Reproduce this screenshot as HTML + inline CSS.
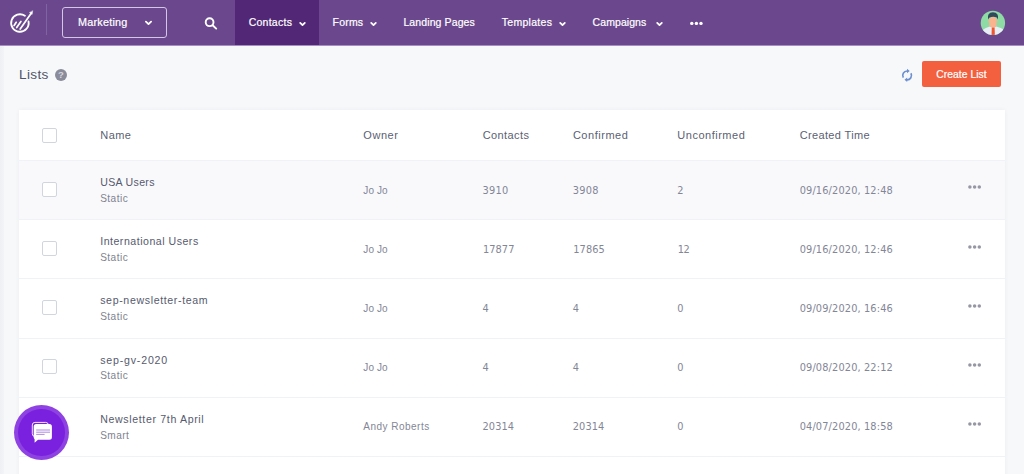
<!DOCTYPE html>
<html><head><meta charset="utf-8">
<style>
*{box-sizing:border-box;margin:0;padding:0}
html,body{width:1024px;height:474px;overflow:hidden}
body{background:#f7f8fa;font-family:"Liberation Sans",sans-serif;position:relative;color:#5b5f73}
.strip{position:absolute;left:0;top:46px;width:4px;height:428px;background:linear-gradient(90deg,#eff0f3,#f3f4f7)}
.nav{position:absolute;left:0;top:0;width:1024px;height:46px;background:#6b488d;border-bottom:1px solid #a58fc0}
.t{position:absolute;top:0;height:45px;line-height:45px;color:#fff;font-size:10.5px;white-space:nowrap;-webkit-text-stroke:0.2px #fff}
#n0{font-size:10.8px}
.active{position:absolute;left:235px;top:0;width:84px;height:45px;background:#522876}
.sep{position:absolute;left:46px;top:4px;width:1px;height:31px;background:#8163a0}
.mk{position:absolute;left:62px;top:7px;width:105px;height:31px;border:1px solid #d4c6e4;border-radius:3px}
.abs{position:absolute}
.chev{fill:none;stroke:#fff;stroke-width:1.8;stroke-linecap:round;stroke-linejoin:round}
h1{position:absolute;left:19px;top:66.5px;font-size:13.6px;font-weight:normal;color:#4f5468;line-height:16px;letter-spacing:0.35px}
.btn{position:absolute;left:922px;top:61px;width:79px;height:26px;background:#f3603f;border-radius:2px;color:#fff;font-size:10.3px;line-height:27.6px;text-align:center;letter-spacing:0.05px;-webkit-text-stroke:0.2px #fff}
.card{position:absolute;left:19px;top:110px;width:986px;height:380px;background:#fff;box-shadow:0 0 4px rgba(70,80,110,0.07)}
.row{position:absolute;left:19px;width:986px;height:59px;border-top:1px solid #f1f2f6}
.row.alt{background:#f9f9fc}
.c{position:absolute;white-space:nowrap;font-size:11px;line-height:14px}
.hd{color:#5b5f73}
.nm{color:#565a6e;font-size:10.6px}
.sub{color:#80838f;font-size:10.1px}
.val{color:#838696;font-size:10px}
.dj{font-family:"DejaVu Sans","Liberation Sans",sans-serif;font-size:9.8px}
.cb{position:absolute;left:42px;width:15px;height:15px;border:1px solid #d0d5e0;border-radius:2px;background:#fff}
.chat{position:absolute;left:14px;top:405px;width:55px;height:55px;border-radius:50%;background:#8e42e2}
.chat:before{content:"";position:absolute;left:4.2px;top:4.2px;width:46.6px;height:46.6px;border-radius:50%;background:#7a20df}
</style></head><body>
<div class="strip"></div>
<div class="nav">
 <div class="active"></div>
 <div class="sep"></div>
 <svg class="abs" style="left:6px;top:6px" width="34" height="34" viewBox="6 6 34 34" fill="none" stroke="#fff" stroke-linecap="round">
  <path d="M28.52 21.48 A8.75 8.75 0 1 1 24.92 15.83" stroke-width="1.85"/>
  <path d="M14.1 25.5 L16.2 22.3" stroke-width="1.7"/>
  <path d="M16.7 27.6 L20.9 21.5" stroke-width="1.7"/>
  <path d="M20.2 29 L31.4 12.9" stroke-width="1.7"/>
  <path d="M32.7 11 L32.1 14.5 L29.6 12.75 Z" fill="#fff" stroke-width="0.4" stroke-linejoin="round"/>
 </svg>
 <div class="mk"></div>
 <svg class="abs chev" style="left:144px;top:19px" width="9" height="8" viewBox="0 0 9 8"><path d="M1.9 2.6 L4.5 5.1 L7.1 2.6"/></svg>
 <svg class="abs" style="left:203px;top:16.4px" width="16" height="15" viewBox="0 0 16 15" fill="none" stroke="#fff" stroke-width="1.9" stroke-linecap="round"><circle cx="6.6" cy="6.2" r="3.9"/><path d="M9.6 9.2 L13.2 12.6"/></svg>
 <svg class="abs chev" style="left:298px;top:20px" width="9" height="8" viewBox="0 0 9 8"><path d="M2.2 2.9 L4.5 5.1 L6.8 2.9"/></svg>
 <svg class="abs chev" style="left:368.6px;top:20px" width="9" height="8" viewBox="0 0 9 8"><path d="M2.2 2.9 L4.5 5.1 L6.8 2.9"/></svg>
 <svg class="abs chev" style="left:558.4px;top:20px" width="9" height="8" viewBox="0 0 9 8"><path d="M2.2 2.9 L4.5 5.1 L6.8 2.9"/></svg>
 <svg class="abs chev" style="left:655px;top:20px" width="9" height="8" viewBox="0 0 9 8"><path d="M2.2 2.9 L4.5 5.1 L6.8 2.9"/></svg>
 <svg class="abs" style="left:689px;top:20px" width="16" height="6" viewBox="0 0 16 6" fill="#fff"><circle cx="2.8" cy="3.4" r="1.7"/><circle cx="7.4" cy="3.4" r="1.7"/><circle cx="12" cy="3.4" r="1.7"/></svg>
 <svg class="abs" style="left:980px;top:10px" width="26" height="26" viewBox="980 10 26 26">
  <defs><clipPath id="av"><circle cx="992.9" cy="22.9" r="12.2"/></clipPath></defs>
  <circle cx="992.9" cy="22.9" r="12.2" fill="#8fdba6"/>
  <g clip-path="url(#av)">
   <path d="M981 36 L981 31 Q986 27.2 990 26.4 L996 26.4 Q1001 27.2 1005.5 31 L1005.5 36 Z" fill="#e9edf5"/>
   <rect x="989.2" y="17" width="7.4" height="10.6" rx="3" fill="#f7b48e"/>
   <path d="M988.6 22 L987.8 21 L989 19.5 Z M997.2 21.6 L998 20.6 L997 19.4Z" fill="#f7b48e"/>
   <path d="M988 19.6 Q986.8 12.4 992.9 12.2 Q999.2 12.4 998 19.4 L996.8 17.6 Q993 16 989.2 17.8 Z" fill="#2f4a5a"/>
   <path d="M991.8 27.4 L994.6 27.4 L994.9 36 L991.5 36 Z" fill="#f0562e"/>
  </g>
 </svg>
</div>
<h1>Lists</h1>
<svg class="abs" style="left:55px;top:68.6px" width="12" height="12" viewBox="0 0 12 12"><circle cx="6" cy="6" r="6" fill="#8b8c9b"/><text x="6" y="9.4" font-size="9.5" font-weight="bold" text-anchor="middle" fill="#d4d5dc" font-family="Liberation Sans, sans-serif">?</text></svg>
<svg class="abs" style="left:899px;top:66px" width="16" height="19" viewBox="899 66 16 19" fill="none" stroke="#6b8fcf" stroke-width="1.7">
 <path d="M903.29 77.6 A4.4 4.4 0 0 1 907.3 71"/><path d="M907 68.7 L907 73.3 L909.7 71 Z" fill="#6b8fcf" stroke="none"/>
 <path d="M910.91 73.2 A4.4 4.4 0 0 1 906.9 79.8"/><path d="M907.2 77.5 L907.2 82.1 L904.5 79.8 Z" fill="#6b8fcf" stroke="none"/>
</svg>
<div class="btn">Create List</div>
<div class="card"></div>
<div class="cb" style="top:128px"></div>
<div class="row alt" style="top:160px"></div>
<div class="cb" style="top:181.8px"></div>
<svg class="abs" style="left:967px;top:184.3px" width="16" height="6" viewBox="0 0 16 6" fill="#9697a5"><circle cx="2.9" cy="3" r="1.75"/><circle cx="7.6" cy="3" r="1.75"/><circle cx="12.3" cy="3" r="1.75"/></svg>
<div class="row" style="top:219px"></div>
<div class="cb" style="top:241.0px"></div>
<svg class="abs" style="left:967px;top:243.5px" width="16" height="6" viewBox="0 0 16 6" fill="#9697a5"><circle cx="2.9" cy="3" r="1.75"/><circle cx="7.6" cy="3" r="1.75"/><circle cx="12.3" cy="3" r="1.75"/></svg>
<div class="row" style="top:278px"></div>
<div class="cb" style="top:300.2px"></div>
<svg class="abs" style="left:967px;top:302.7px" width="16" height="6" viewBox="0 0 16 6" fill="#9697a5"><circle cx="2.9" cy="3" r="1.75"/><circle cx="7.6" cy="3" r="1.75"/><circle cx="12.3" cy="3" r="1.75"/></svg>
<div class="row" style="top:338px"></div>
<div class="cb" style="top:359.4px"></div>
<svg class="abs" style="left:967px;top:361.9px" width="16" height="6" viewBox="0 0 16 6" fill="#9697a5"><circle cx="2.9" cy="3" r="1.75"/><circle cx="7.6" cy="3" r="1.75"/><circle cx="12.3" cy="3" r="1.75"/></svg>
<div class="row" style="top:397px"></div>
<svg class="abs" style="left:967px;top:421.1px" width="16" height="6" viewBox="0 0 16 6" fill="#9697a5"><circle cx="2.9" cy="3" r="1.75"/><circle cx="7.6" cy="3" r="1.75"/><circle cx="12.3" cy="3" r="1.75"/></svg>
<div class="row" style="top:456px"></div>
<div class="t" id="n0" style="left:78.10px;top:0px;letter-spacing:0.224px;">Marketing</div>
<div class="t" id="n1" style="left:248.70px;top:0px;letter-spacing:0.252px;">Contacts</div>
<div class="t" id="n2" style="left:332.50px;top:0px;letter-spacing:0.212px;">Forms</div>
<div class="t" id="n3" style="left:403.40px;top:0px;letter-spacing:0.111px;">Landing Pages</div>
<div class="t" id="n4" style="left:501.70px;top:0px;letter-spacing:0.305px;">Templates</div>
<div class="t" id="n5" style="left:592.60px;top:0px;letter-spacing:0.072px;">Campaigns</div>
<div class="c hd" id="h0" style="left:100.30px;top:128px;letter-spacing:0.385px;">Name</div>
<div class="c hd" id="h1" style="left:363.30px;top:128px;letter-spacing:0.548px;">Owner</div>
<div class="c hd" id="h2" style="left:482.70px;top:128px;letter-spacing:0.397px;">Contacts</div>
<div class="c hd" id="h3" style="left:572.90px;top:128px;letter-spacing:0.531px;">Confirmed</div>
<div class="c hd" id="h4" style="left:677.30px;top:128px;letter-spacing:0.514px;">Unconfirmed</div>
<div class="c hd" id="h5" style="left:799.70px;top:128px;letter-spacing:0.352px;">Created Time</div>
<div class="c nm" id="r0n" style="left:100.20px;top:175px;letter-spacing:0.311px;">USA Users</div>
<div class="c sub" id="r0s" style="left:100.20px;top:192px;letter-spacing:0.450px;">Static</div>
<div class="c val" id="r0o" style="left:363.30px;top:184px;letter-spacing:0.098px;">Jo Jo</div>
<div class="c val dj" id="r0c" style="left:482.50px;top:184px;letter-spacing:0.254px;">3910</div>
<div class="c val dj" id="r0f" style="left:572.80px;top:184px;letter-spacing:0.254px;">3908</div>
<div class="c val dj" id="r0u" style="left:677.30px;top:184px;letter-spacing:0.000px;">2</div>
<div class="c val dj" id="r0d" style="left:799.70px;top:184px;letter-spacing:0.135px;">09/16/2020, 12:48</div>
<div class="c nm" id="r1n" style="left:100.20px;top:234px;letter-spacing:0.504px;">International Users</div>
<div class="c sub" id="r1s" style="left:100.20px;top:251px;letter-spacing:0.450px;">Static</div>
<div class="c val" id="r1o" style="left:363.30px;top:243px;letter-spacing:0.098px;">Jo Jo</div>
<div class="c val dj" id="r1c" style="left:482.90px;top:243px;letter-spacing:0.082px;">17877</div>
<div class="c val dj" id="r1f" style="left:573.30px;top:243px;letter-spacing:0.082px;">17865</div>
<div class="c val dj" id="r1u" style="left:677.70px;top:243px;letter-spacing:-0.369px;">12</div>
<div class="c val dj" id="r1d" style="left:799.70px;top:243px;letter-spacing:0.135px;">09/16/2020, 12:46</div>
<div class="c nm" id="r2n" style="left:100.20px;top:293px;letter-spacing:0.640px;">sep-newsletter-team</div>
<div class="c sub" id="r2s" style="left:100.20px;top:310px;letter-spacing:0.450px;">Static</div>
<div class="c val" id="r2o" style="left:363.30px;top:302px;letter-spacing:0.098px;">Jo Jo</div>
<div class="c val dj" id="r2c" style="left:482.50px;top:302px;letter-spacing:0.000px;">4</div>
<div class="c val dj" id="r2f" style="left:572.80px;top:302px;letter-spacing:0.000px;">4</div>
<div class="c val dj" id="r2u" style="left:677.30px;top:302px;letter-spacing:0.000px;">0</div>
<div class="c val dj" id="r2d" style="left:799.70px;top:302px;letter-spacing:0.135px;">09/09/2020, 16:46</div>
<div class="c nm" id="r3n" style="left:100.20px;top:353px;letter-spacing:0.809px;">sep-gv-2020</div>
<div class="c sub" id="r3s" style="left:100.20px;top:369px;letter-spacing:0.450px;">Static</div>
<div class="c val" id="r3o" style="left:363.30px;top:361px;letter-spacing:0.098px;">Jo Jo</div>
<div class="c val dj" id="r3c" style="left:482.50px;top:361px;letter-spacing:0.000px;">4</div>
<div class="c val dj" id="r3f" style="left:572.80px;top:361px;letter-spacing:0.000px;">4</div>
<div class="c val dj" id="r3u" style="left:677.30px;top:361px;letter-spacing:0.000px;">0</div>
<div class="c val dj" id="r3d" style="left:799.70px;top:361px;letter-spacing:0.135px;">09/08/2020, 22:12</div>
<div class="c nm" id="r4n" style="left:100.20px;top:412px;letter-spacing:0.644px;">Newsletter 7th April</div>
<div class="c sub" id="r4s" style="left:100.20px;top:429px;letter-spacing:0.420px;">Smart</div>
<div class="c val" id="r4o" style="left:363.30px;top:420px;letter-spacing:0.482px;">Andy Roberts</div>
<div class="c val dj" id="r4c" style="left:482.50px;top:420px;letter-spacing:0.082px;">20314</div>
<div class="c val dj" id="r4f" style="left:572.80px;top:420px;letter-spacing:0.082px;">20314</div>
<div class="c val dj" id="r4u" style="left:677.30px;top:420px;letter-spacing:0.000px;">0</div>
<div class="c val dj" id="r4d" style="left:799.70px;top:420px;letter-spacing:0.135px;">04/07/2020, 18:58</div>
<div class="chat"></div>
<svg class="abs" style="left:30px;top:420px" width="26" height="26" viewBox="30 420 26 26">
 <rect x="32.3" y="422.4" width="16" height="14" rx="2.6" fill="none" stroke="#fff" stroke-width="0.9"/>
 <path d="M36.2 424 H49.4 A2.5 2.5 0 0 1 51.9 426.5 V437.2 A2.5 2.5 0 0 1 49.4 439.7 H38 L34.6 442.8 L34.6 439.2 A2.5 2.5 0 0 1 33.7 437.2 V426.5 A2.5 2.5 0 0 1 36.2 424 Z" fill="#fff"/>
 <path d="M36.2 430 H50 M36.2 432.2 H50 M36.2 434.4 H44.6" stroke="#a77be0" stroke-width="0.9"/>
</svg>
</body></html>
